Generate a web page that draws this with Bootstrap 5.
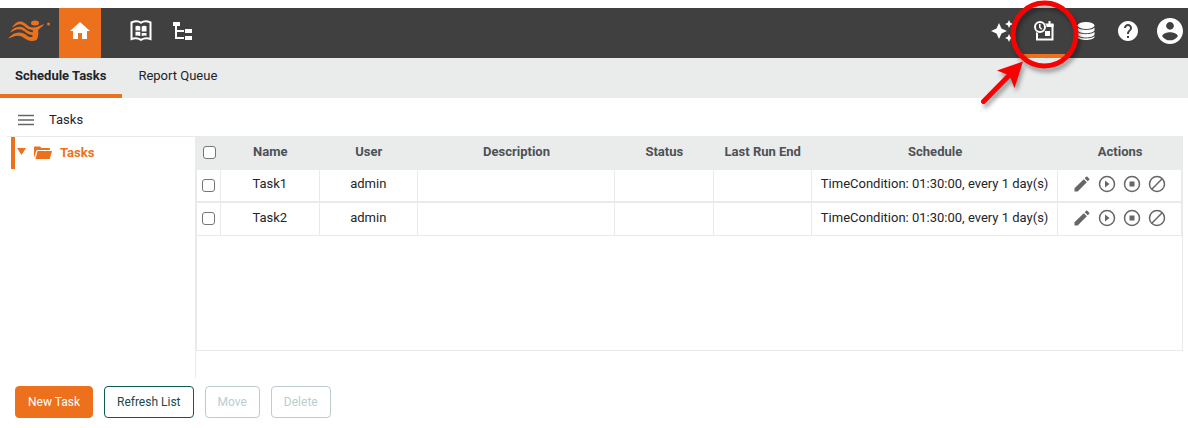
<!DOCTYPE html>
<html lang="en">
<head>
<meta charset="utf-8">
<meta name="viewport" content="width=device-width, initial-scale=1">
<title>Schedule Tasks</title>
<link href="https://cdn.jsdelivr.net/npm/bootstrap@5.3.0/dist/css/bootstrap.min.css" rel="stylesheet">
<style>
:root { --brand: #ed711c; --line: #e9ebea; --pale: #eaeceb; --teal: #0d5b58; }
body { font: 13px/20px Roboto, sans-serif; color: #212529; background: #fff; }
svg { display: block; fill: currentColor; }
.topbar { height: 50px; background: #404040; }
.brand-logo { width: 59px; padding-left: 8px; color: var(--brand); }
.brand-logo:hover { color: var(--brand); }
.top-item { width: 42px; height: 50px; padding-bottom: 4px; color: #fff; }
.top-item.home { background: var(--brand); margin-right: 19px; }
.top-item.current { border-bottom: 4px solid var(--brand); padding-bottom: 0; }
.top-item.user { width: 39px; padding-right: 5px; }
.callout { position: absolute; left: -48px; top: -8px; z-index: 5; pointer-events: none; filter: drop-shadow(2px 4px 2px rgba(0,0,0,.35)); }
.tabs { background: var(--pale); height: 40px; }
.tabs a { color: #212529; padding: 8px 16px; border-bottom: 4px solid transparent; text-decoration: none; }
.tabs a.active { font-weight: 700; border-color: var(--brand); padding-left: 15px; }
.toolrow { height: 38px; padding: 5px 18px 0; gap: 15px; }
.menu-btn { padding: 0; border: 0; background: none; color: #666; }
.panes { padding-left: 7px; }
.tree { width: 189px; border-top: 1px solid var(--line); border-right: 1px solid var(--line); }
.tree-node { height: 32px; margin-left: 4px; padding-left: 2px; border-left: 4px solid var(--brand); color: var(--brand); font-weight: 700; }
.grid-box { border: 1px solid var(--line); border-top: 0; margin: 0 5px 27px 0; }
.task-grid { table-layout: fixed; border-collapse: separate; border-spacing: 0; --bs-table-bg: transparent; color: #212529; }
.task-grid th, .task-grid td { text-align: center; vertical-align: middle; padding: 0 0 3px; border: 0 solid var(--line); white-space: nowrap; }
.task-grid th { height: 34px; background: var(--pale); color: #4d5156; font-weight: 700; }
.task-grid td { height: 33px; border-width: 0 1px 1px 0; }
.task-grid tr.split td { border-bottom-width: 2px; }
.task-grid .pick { padding-bottom: 1px; }
.form-check-input { width: 13px; height: 13px; margin: 0 auto; border: 1px solid #767676; border-radius: 3px !important; display: block; }
.act { width: 25px; height: 24px; padding: 0; border: 0; background: none; color: #666; }
.foot { padding: 8px 15px 10px; gap: 11px; }
.foot .btn { font-size: 12px; line-height: 18px; padding: 6px 12px; border-radius: 4px; --bs-btn-disabled-opacity: 1; }
.btn-main { --bs-btn-bg: var(--brand); --bs-btn-color: #fff; --bs-btn-border-color: var(--brand); --bs-btn-hover-bg: #d9620f; --bs-btn-hover-color: #fff; }
.btn-line { --bs-btn-bg: #fff; --bs-btn-color: #174a4a; --bs-btn-border-color: var(--teal); --bs-btn-disabled-color: #b9cecd; --bs-btn-disabled-border-color: #b9cecd; }
</style>
</head>
<body class="d-flex flex-column min-vh-100 pt-2">

<svg class="d-none" xmlns="http://www.w3.org/2000/svg">
  <symbol id="edit" viewBox="0 0 24 24"><path d="M3 17.2V21h3.8L17.8 9.900l-3.700-3.700L3 17.200zM20.700 7c.4-.4.4-1 0-1.400l-2.300-2.300c-.4-.4-1-.4-1.400 0l-1.800 1.800 3.700 3.700L20.700 7z"/></symbol>
  <symbol id="play" viewBox="0 0 18 18"><circle cx="9" cy="9" r="7.500" fill="none" stroke="currentColor" stroke-width="1.500"/><path d="M7 5.500v7l4.500-3.500z"/></symbol>
  <symbol id="stop" viewBox="0 0 18 18"><circle cx="9" cy="9" r="7.500" fill="none" stroke="currentColor" stroke-width="1.500"/><path d="M6.500 6.500h5v5h-5z"/></symbol>
  <symbol id="block" viewBox="0 0 18 18"><circle cx="9" cy="9" r="7.500" fill="none" stroke="currentColor" stroke-width="1.500"/><path d="M3.800 14.200L14.200 3.800" stroke="currentColor" stroke-width="1.500"/></symbol>
</svg>

<header class="topbar d-flex">
  <a href="#" class="brand-logo d-flex align-items-center pb-1" aria-label="Home page">
    <svg width="42" height="24" viewBox="0 0 42 24">
      <ellipse cx="27" cy="4" rx="4" ry="2.500"/><circle cx="40.500" cy="5" r="1.500"/>
      <path d="M4 8.500C7 3.500 10 2 13 2.500c5 .8 6.500 6 12 6 4 0 7-2 11-3.500-1 2.500-3.500 3.500-5.500 5.500-1 1.500.5 3-.3 5.500C29.500 19 30 22 24 22c-6.500 0-8-5.300-14-5.300-4 0-6 1.800-10 2.800 3.500-4 7-6 11-6 6.500 0 8 4.600 12 4.600 1.700 0 2.200-1.600 1-2.200-6.500-.6-7.500-5.700-13-5.700-4 0-6 2-9 3.300C4.500 10 7.500 7.800 11.500 7.800c6 0 7 5.400 13 5.400.8-.8.700-1.700-.3-2.200C17 10.500 17 5.500 12 5.300 9 5.200 7 7.200 4 8.500z"/>
    </svg>
  </a>
  <a href="#" class="top-item home d-flex align-items-center justify-content-center" aria-label="Home"><svg width="24" height="24" viewBox="0 0 24 24"><path d="M10 20v-6h4v6h5v-8h3L12 3 2 12h3v8z"/></svg></a>
  <a href="#" class="top-item d-flex align-items-center justify-content-center" aria-label="Repository">
    <svg width="22" height="22" viewBox="0 0 22 22"><path d="M1.500 2.500C5 1 8.500 1 11 2.800c2.500-1.800 6-1.800 9.500-.3v16.500c-3.500-1.200-6.500-1-9.500.8-3-1.800-6-2-9.500-.8z" fill="none" stroke="currentColor" stroke-width="2"/><path d="M5.500 6.200q2.500-.8 4.800.2v4H5.500zM5.500 11.800h4.800v4.200q-2.300-.8-4.800-.2zM11.700 6.400q2.300-1 4.800-.2v5.300h-4.800zM11.700 13h4.800v2.800q-2.500-.6-4.800.2z"/></svg>
  </a>
  <a href="#" class="top-item d-flex align-items-center justify-content-center" aria-label="Tree">
    <svg width="20" height="20" viewBox="0 0 20 20"><path d="M0 1h7v4H0zM12 8h7v4h-7zM12 15h7v4h-7zM2 4h2v5h7v2H4v5h7v2H2z"/></svg>
  </a>
  <nav class="d-flex ms-auto" aria-label="Tools">
    <a href="#" class="top-item d-flex align-items-center justify-content-center" aria-label="Assistant"><svg width="24" height="24" viewBox="0 0 24 24"><path d="M19 9l1.250-2.750L23 5l-2.750-1.250L19 1l-1.250 2.750L15 5l2.750 1.250zM19 15l-1.250 2.750L15 19l2.750 1.250L19 23l1.250-2.750L23 19l-2.750-1.250zM11.500 9.500L9 4 6.500 9.500 1 12l5.500 2.500L9 20l2.500-5.500L17 12z"/></svg></a>
    <a href="#" class="top-item current position-relative d-flex align-items-center justify-content-center" aria-label="Schedule">
      <svg width="22" height="22" viewBox="0 0 22 22"><path d="M4 11.500v8h15.500V5H12" fill="none" stroke="currentColor" stroke-width="2"/><path d="M15.500 1h2v3h-2zM12 3.500h8.500V7H12zM12 11h5v5h-5z"/><circle cx="7" cy="7" r="6.500" fill="#404040"/><circle cx="7" cy="7" r="5" fill="none" stroke="currentColor" stroke-width="2"/><path d="M6.800 4v3.500l2 1.800" fill="none" stroke="currentColor" stroke-width="1.500"/></svg>
      <svg class="callout" width="112" height="112" viewBox="0 0 112 112"><circle cx="69.500" cy="34.500" r="31.500" fill="none" stroke="#fa0000" stroke-width="5"/><path d="M8.500 101.500L35 74.500" stroke="#fa0000" stroke-width="5" stroke-linecap="round"/><path d="M48 61.500L22 70.500l10 4 3.500 3.500 4 10z" fill="#fa0000"/></svg>
    </a>
    <a href="#" class="top-item d-flex align-items-center justify-content-center" aria-label="Data"><svg width="18" height="20" viewBox="0 0 18 20"><ellipse cx="9" cy="4.500" rx="8.500" ry="3.500"/><path d="M.5 6.500c2 3.200 15 3.200 17 0v2.800c-1 4-16 4-17 0zM.5 10.800c2 3.200 15 3.200 17 0v2.800c-1 4-16 4-17 0zM.5 15c2 3.200 15 3.200 17 0v1c-1 4-16 4-17 0z"/></svg></a>
    <a href="#" class="top-item d-flex align-items-center justify-content-center" aria-label="Help"><svg width="24" height="24" viewBox="0 0 24 24"><path d="M12 2C6.480 2 2 6.480 2 12s4.480 10 10 10 10-4.480 10-10S17.520 2 12 2zm1 17h-2v-2h2v2zm2.070-7.750l-.9.920C13.450 12.900 13 13.500 13 15h-2v-.5c0-1.100.45-2.100 1.170-2.830l1.240-1.260c.37-.36.590-.86.590-1.410 0-1.100-.9-2-2-2s-2 .9-2 2H8c0-2.210 1.790-4 4-4s4 1.790 4 4c0 .88-.36 1.680-.93 2.250z"/></svg></a>
    <a href="#" class="top-item user d-flex align-items-center justify-content-end" aria-label="Account"><svg width="26" height="26" viewBox="2 2 20 20"><path d="M12 2C6.480 2 2 6.480 2 12s4.480 10 10 10 10-4.480 10-10S17.520 2 12 2zm0 3c1.660 0 3 1.340 3 3s-1.340 3-3 3-3-1.340-3-3 1.340-3 3-3zm0 14.200c-2.500 0-4.710-1.280-6-3.220.030-1.990 4-3.080 6-3.080 1.990 0 5.970 1.090 6 3.080-1.290 1.940-3.500 3.220-6 3.220z"/></svg></a>
  </nav>
</header>

<nav class="tabs d-flex" aria-label="Sections">
  <a href="#" class="active">Schedule Tasks</a>
  <a href="#">Report Queue</a>
</nav>

<div class="toolrow d-flex align-items-center">
  <button type="button" class="menu-btn" aria-label="Toggle tree"><svg width="16" height="12" viewBox="0 0 16 12"><path d="M0 1.500h16M0 6h16M0 10.500h16" stroke="currentColor" stroke-width="1.500"/></svg></button>
  <span>Tasks</span>
</div>

<main class="panes d-flex flex-grow-1">
  <div class="tree flex-shrink-0">
    <div class="tree-node d-flex align-items-center">
      <svg class="mb-1" width="9" height="7" viewBox="0 0 9 7"><path d="M0 0h9L4.500 7z"/></svg>
      <svg class="ms-2" width="18" height="14" viewBox="0 0 18 14"><path d="M0 12V1.500Q0 .5 1 .5h5L7.500 2H15q1 0 1 1v1H3.500q-1 0-1.300 1zM3.500 5H18l-2.200 8H1.500z"/></svg>
      <span class="ms-2">Tasks</span>
    </div>
  </div>
  <div class="grid-box flex-grow-1">
    <table class="table task-grid mb-0">
      <colgroup><col style="width:24px"><col style="width:10%"><col style="width:10%"><col style="width:20%"><col style="width:10%"><col style="width:10%"><col style="width:25%"><col></colgroup>
      <thead>
        <tr><th class="pick"><input class="form-check-input" type="checkbox" aria-label="Select all"></th><th>Name</th><th>User</th><th>Description</th><th>Status</th><th>Last Run End</th><th>Schedule</th><th>Actions</th></tr>
      </thead>
      <tbody>
        <tr class="split"><td class="pick"><input class="form-check-input" type="checkbox" aria-label="Select Task1"></td><td>Task1</td><td>admin</td><td></td><td></td><td></td><td>TimeCondition: 01:30:00, every 1 day(s)</td>
          <td><div class="d-flex justify-content-center"><button type="button" class="act" aria-label="Edit"><svg class="m-auto" width="20" height="20"><use href="#edit"/></svg></button><button type="button" class="act" aria-label="Run"><svg class="m-auto" width="18" height="18"><use href="#play"/></svg></button><button type="button" class="act" aria-label="Stop"><svg class="m-auto" width="18" height="18"><use href="#stop"/></svg></button><button type="button" class="act" aria-label="Disable"><svg class="m-auto" width="18" height="18"><use href="#block"/></svg></button></div></td></tr>
        <tr><td class="pick"><input class="form-check-input" type="checkbox" aria-label="Select Task2"></td><td>Task2</td><td>admin</td><td></td><td></td><td></td><td>TimeCondition: 01:30:00, every 1 day(s)</td>
          <td><div class="d-flex justify-content-center"><button type="button" class="act" aria-label="Edit"><svg class="m-auto" width="20" height="20"><use href="#edit"/></svg></button><button type="button" class="act" aria-label="Run"><svg class="m-auto" width="18" height="18"><use href="#play"/></svg></button><button type="button" class="act" aria-label="Stop"><svg class="m-auto" width="18" height="18"><use href="#stop"/></svg></button><button type="button" class="act" aria-label="Disable"><svg class="m-auto" width="18" height="18"><use href="#block"/></svg></button></div></td></tr>
      </tbody>
    </table>
  </div>
</main>

<footer class="foot d-flex">
  <button type="button" class="btn btn-main">New Task</button>
  <button type="button" class="btn btn-line">Refresh List</button>
  <button type="button" class="btn btn-line" disabled>Move</button>
  <button type="button" class="btn btn-line" disabled>Delete</button>
</footer>

<script src="https://cdn.jsdelivr.net/npm/bootstrap@5.3.0/dist/js/bootstrap.bundle.min.js"></script>
</body>
</html>
